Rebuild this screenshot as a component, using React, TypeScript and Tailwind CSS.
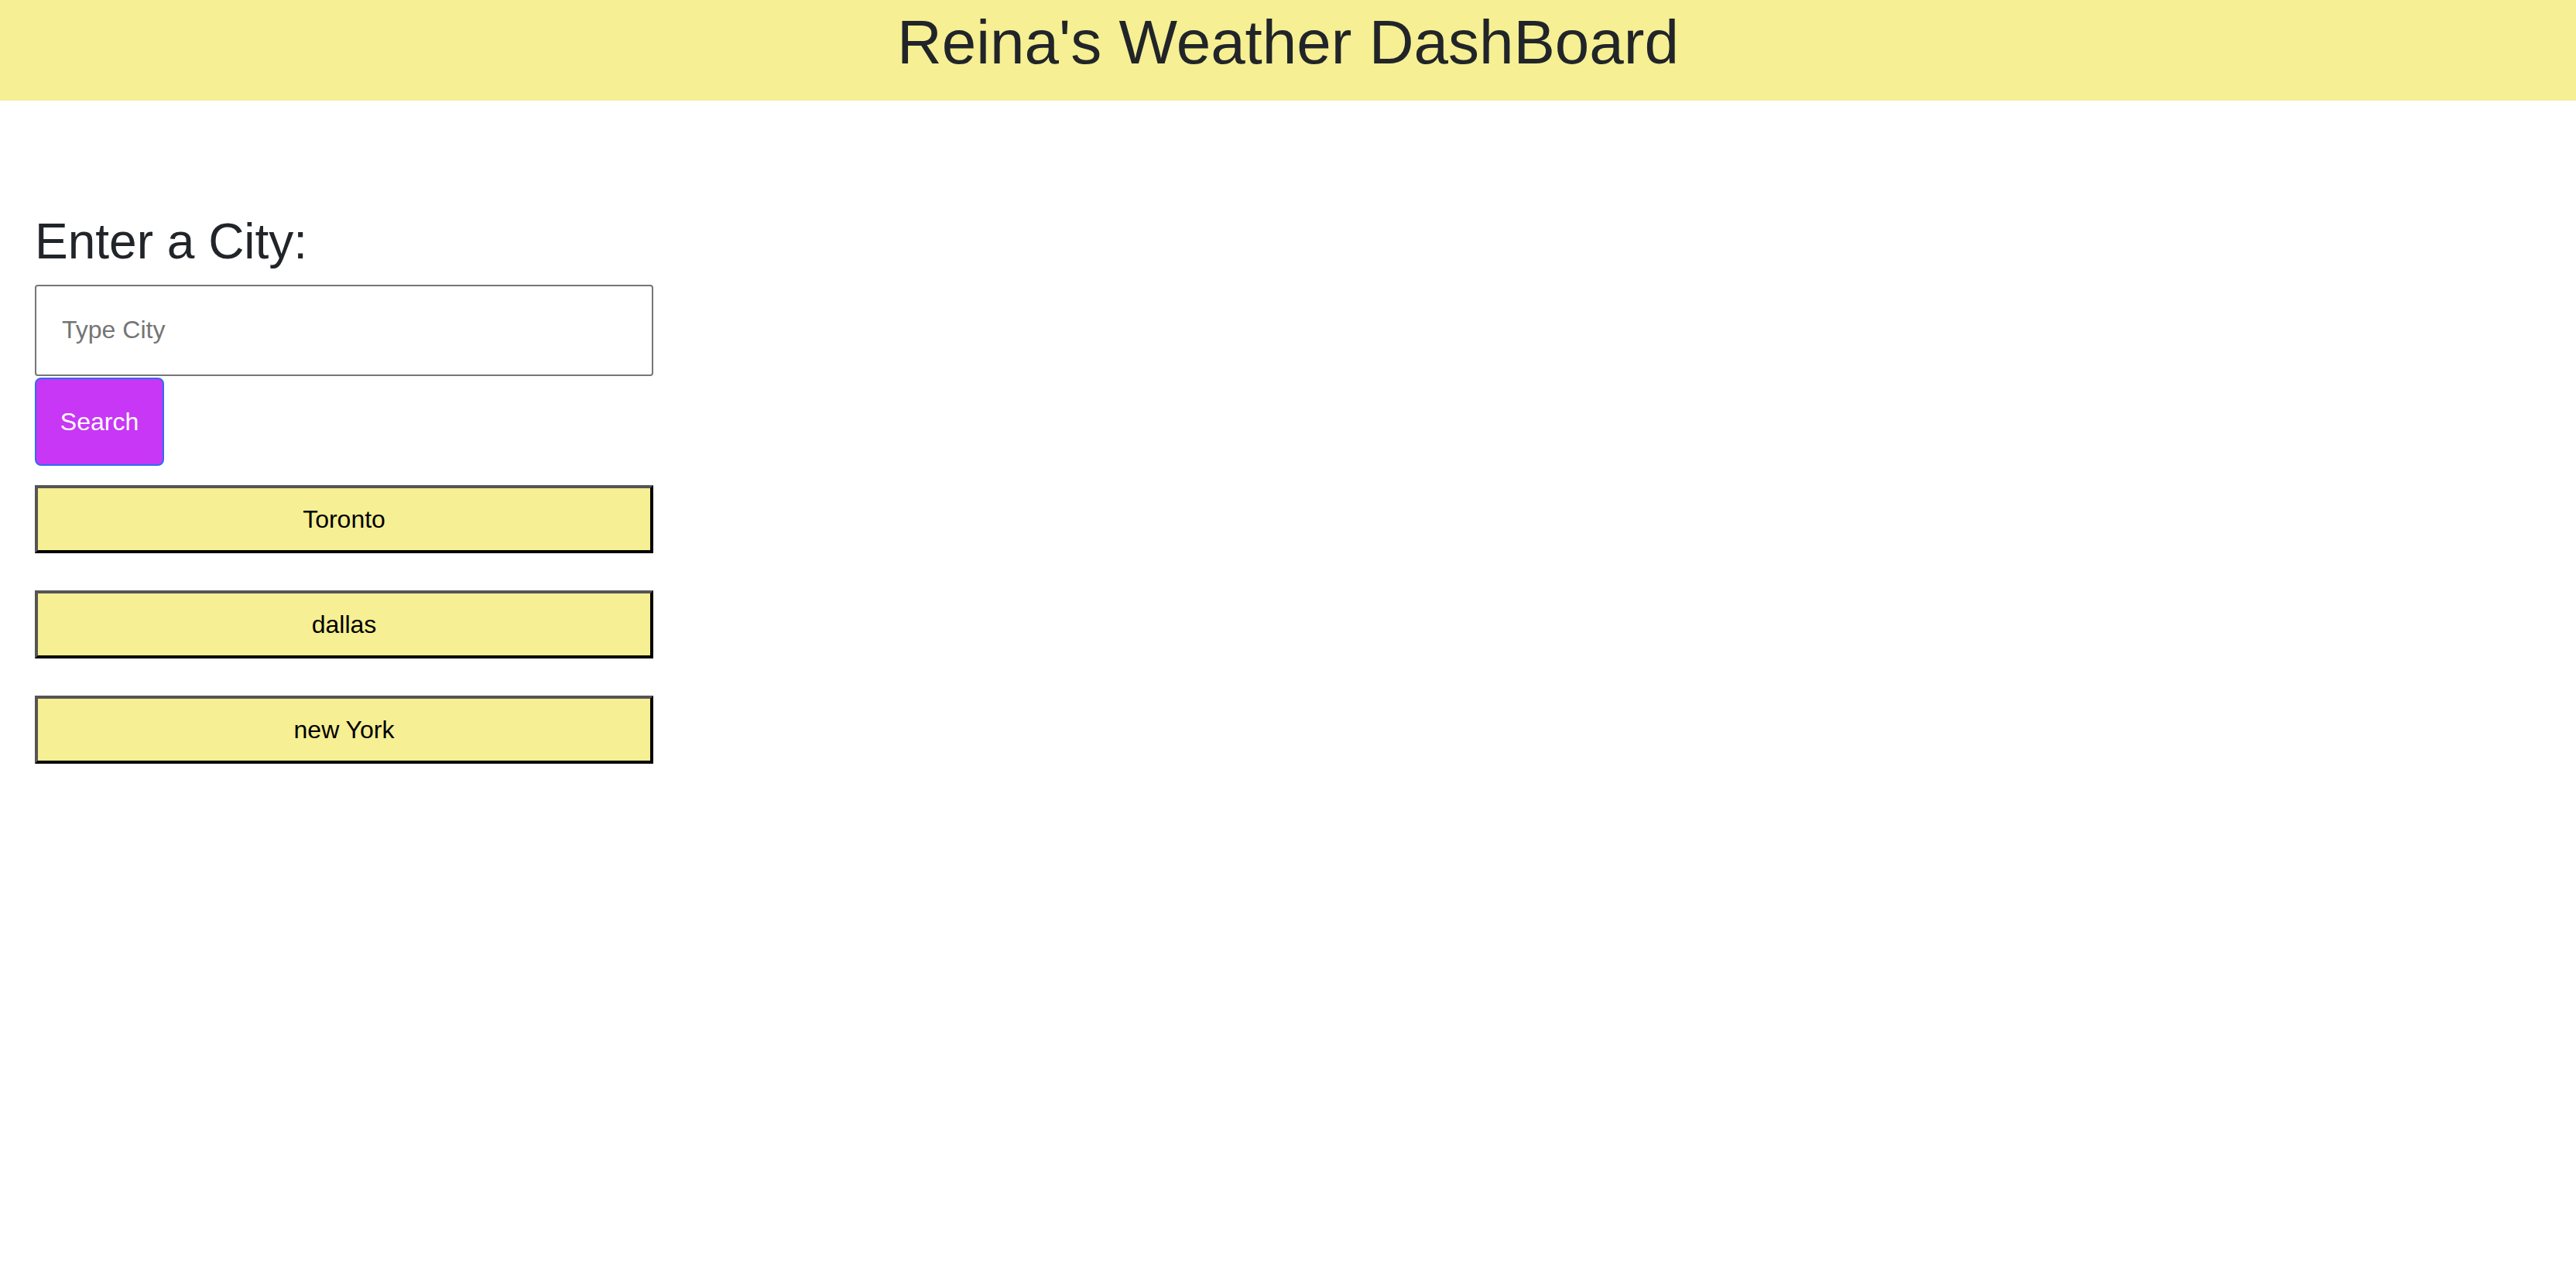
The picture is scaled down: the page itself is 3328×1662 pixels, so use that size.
import { useState } from 'react';

const font = { fontFamily: '"Liberation Sans", Arial, sans-serif' };

export default function App() {
  const [city, setCity] = useState('');
  const [history] = useState<string[]>(['Toronto', 'dallas', 'new York']);

  return (
    <div className="min-h-screen bg-white text-[#212529]" style={font}>
      <header className="h-[130px] bg-[#f6ef93] pt-[7px] text-center">
        <h1 className="text-[80px] leading-[1.2] font-normal">Reina's Weather DashBoard</h1>
      </header>

      <main className="pl-[45px] pt-[144px] w-[844px]">
        <h2 className="text-[64px] leading-[1.2] font-normal mb-[17px]">Enter a City:</h2>
        <input
          value={city}
          onChange={(e) => setCity(e.target.value)}
          placeholder="Type City"
          className="block w-[799px] h-[118px] border-2 border-[#767676] rounded-[4px] pl-[33px] text-[32px] text-black placeholder:text-[#757575] outline-none"
        />
        <button className="block mt-[2px] w-[167px] h-[114px] bg-[#c837f5] border-2 border-[#2f6cf2] rounded-[8px] text-white text-[32px]">
          Search
        </button>
        <div className="flex flex-col gap-[48px] mt-[25px]">
          {history.map((c) => (
            <button
              key={c}
              className="w-[799px] h-[88px] bg-[#f6ef93] border-4 border-t-[#555555] border-l-[#555555] border-b-black border-r-black text-black text-[32px]"
            >
              {c}
            </button>
          ))}
        </div>
      </main>
    </div>
  );
}
